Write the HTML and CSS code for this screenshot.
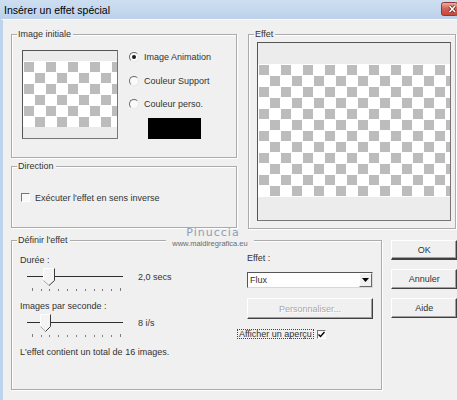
FILE: index.html
```html
<!DOCTYPE html>
<html lang="fr">

<head>
    <meta charset="UTF-8">
    <title>Insérer un effet spécial</title>
    <link rel="stylesheet" href="styles.css">
</head>

<body>
    <div class="window">
        <div class="titlebar">
            <span class="title">Insérer un effet spécial</span>
            <div class="close-btn">
                <svg width="16" height="14" viewBox="0 0 16 14">
                    <defs>
                        <linearGradient id="closeGrad" x1="0" y1="0" x2="0" y2="1">
                            <stop offset="0" stop-color="#eab2a6"/>
                            <stop offset="0.5" stop-color="#d0604f"/>
                            <stop offset="1" stop-color="#c9453a"/>
                        </linearGradient>
                    </defs>
                    <rect x="0.5" y="0.5" width="16" height="13" rx="2" fill="url(#closeGrad)" stroke="#8e3b33"/>
                    <path d="M8.5 4 L14 10 M14 4 L8.5 10" stroke="#5a1f1a" stroke-width="3"/>
                    <path d="M8.5 4 L14 10 M14 4 L8.5 10" stroke="#fff" stroke-width="1.6"/>
                </svg>
            </div>
        </div>

        <div class="dialog">
            <div class="top-row">
                <div class="left-col">
                    <div class="group group-initial">
                        <div class="group-title">Image initiale</div>
                        <div class="initial-body">
                            <div class="preview small-preview">
                                <div class="checker"></div>
                            </div>
                            <div class="options">
                                <div class="radio-row"><span class="radio checked"></span>Image Animation</div>
                                <div class="radio-row"><span class="radio"></span>Couleur Support</div>
                                <div class="radio-row"><span class="radio"></span>Couleur perso.</div>
                                <div class="color-swatch"></div>
                            </div>
                        </div>
                    </div>

                    <div class="group group-direction">
                        <div class="group-title">Direction</div>
                        <div class="check-row"><span class="checkbox"></span>Exécuter l'effet en sens inverse</div>
                    </div>
                </div>

                <div class="group group-effect">
                    <div class="group-title">Effet</div>
                    <div class="preview big-preview">
                        <div class="checker"></div>
                    </div>
                </div>
            </div>

            <div class="bottom-row">
                <div class="group group-define">
                    <div class="group-title">Définir l'effet</div>
                    <div class="define-body">
                        <div class="define-left">
                            <div class="field-label first">Durée :</div>
                            <div class="slider-row">
                                <svg class="slider" width="106" height="26" viewBox="0 0 106 26">
                                    <line x1="3" y1="10.5" x2="99" y2="10.5" stroke="#2e2e2e"/>
                                    <polygon points="19.5,2.5 30.5,2.5 30.5,14.5 25,19.5 19.5,14.5" fill="#f4f4f4"/>
                                    <path d="M19.5 14.5 V2.5 H30.5" stroke="#fff" fill="none"/>
                                    <path d="M19.5 14.5 L25 19.5" stroke="#a8a8a8" fill="none"/>
                                    <path d="M30.5 2.5 V14.5 L25 19.5" stroke="#3a3a3a" fill="none"/>
                                    <g fill="#7a7a7a">
                                        <rect x="8" y="22" width="1" height="3"/>
                                        <rect x="17" y="23" width="1" height="2"/>
                                        <rect x="25" y="23" width="1" height="2"/>
                                        <rect x="34" y="23" width="1" height="2"/>
                                        <rect x="43" y="23" width="1" height="2"/>
                                        <rect x="52" y="23" width="1" height="2"/>
                                        <rect x="61" y="23" width="1" height="2"/>
                                        <rect x="70" y="23" width="1" height="2"/>
                                        <rect x="78" y="23" width="1" height="2"/>
                                        <rect x="87" y="23" width="1" height="2"/>
                                        <rect x="96" y="22" width="1" height="3"/>
                                    </g>
                                </svg>
                                <span class="slider-value">2,0 secs</span>
                            </div>

                            <div class="field-label">Images par seconde :</div>
                            <div class="slider-row">
                                <svg class="slider" width="106" height="26" viewBox="0 0 106 26">
                                    <line x1="3" y1="10.5" x2="99" y2="10.5" stroke="#2e2e2e"/>
                                    <polygon points="16.5,2.5 26.5,2.5 26.5,14.5 21.5,19.5 16.5,14.5" fill="#f4f4f4"/>
                                    <path d="M16.5 14.5 V2.5 H26.5" stroke="#fff" fill="none"/>
                                    <path d="M16.5 14.5 L21.5 19.5" stroke="#a8a8a8" fill="none"/>
                                    <path d="M26.5 2.5 V14.5 L21.5 19.5" stroke="#3a3a3a" fill="none"/>
                                    <g fill="#7a7a7a">
                                        <rect x="8" y="22" width="1" height="3"/>
                                        <rect x="17" y="23" width="1" height="2"/>
                                        <rect x="25" y="23" width="1" height="2"/>
                                        <rect x="34" y="23" width="1" height="2"/>
                                        <rect x="43" y="23" width="1" height="2"/>
                                        <rect x="52" y="23" width="1" height="2"/>
                                        <rect x="61" y="23" width="1" height="2"/>
                                        <rect x="70" y="23" width="1" height="2"/>
                                        <rect x="78" y="23" width="1" height="2"/>
                                        <rect x="87" y="23" width="1" height="2"/>
                                        <rect x="96" y="22" width="1" height="3"/>
                                    </g>
                                </svg>
                                <span class="slider-value">8 i/s</span>
                            </div>

                            <div class="summary">L'effet contient un total de 16 images.</div>
                        </div>

                        <div class="define-right">
                            <div class="effect-label">Effet :</div>
                            <div class="select">
                                <span class="select-text">Flux</span>
                                <span class="select-arrow">
                                    <svg width="7" height="4" viewBox="0 0 7 4"><polygon points="0,0 7,0 3.5,4" fill="#000"/></svg>
                                </span>
                            </div>
                            <div class="btn custom-btn">Personnaliser...</div>
                            <div class="preview-toggle">
                                <span class="focus-label">Afficher un aperçu</span>
                                <span class="checkbox checked">
                                    <svg width="7" height="7" viewBox="0 0 7 7"><path d="M0.5 3.5 L2.5 5.5 L6.5 1" stroke="#000" stroke-width="1.4" fill="none"/></svg>
                                </span>
                            </div>
                        </div>
                    </div>
                </div>

                <div class="buttons">
                    <div class="btn default">OK</div>
                    <div class="btn">Annuler</div>
                    <div class="btn">Aide</div>
                </div>
            </div>
        </div>

        <div class="watermark">
            <div class="wm-name">Pinuccia</div>
            <div class="wm-site">www.maidiregrafica.eu</div>
        </div>
    </div>
</body>

</html>
```

FILE: styles.css
```css
* {
    box-sizing: border-box;
}

body {
    margin: 0;
    width: 457px;
    height: 400px;
    overflow: hidden;
    background-color: #f0f0f0;
    font-family: "Liberation Sans", Arial, sans-serif;
    font-size: 9px;
    color: #333;
}

.window {
    position: relative;
    height: 400px;
}

/* title bar */
.titlebar {
    height: 19px;
    display: flex;
    justify-content: space-between;
    align-items: flex-start;
    background: linear-gradient(#cddef1, #bcd2eb);
}

.title {
    padding: 4px 0 0 4px;
    font-size: 10.5px;
    line-height: 12px;
    color: #000;
}

.close-btn {
    width: 16px;
    height: 14px;
    margin-top: 2px;
}

.close-btn svg {
    display: block;
}

.dialog {
    height: 381px;
    border-left: 3px solid #bed3ec;
    border-top: 1px solid #f9fafc;
    padding: 14px 0 0 8px;
}

/* group boxes */
.group {
    border: 1px solid #ababab;
    box-shadow: inset 1px 1px 0 #fff, 1px 1px 0 #fff;
}

.group-title {
    display: table;
    margin: -6px 0 0 5px;
    padding: 0 2px 0 1px;
    background-color: #f0f0f0;
    line-height: 11px;
}

.top-row {
    display: flex;
    gap: 11px;
}

.left-col {
    width: 226px;
    display: flex;
    flex-direction: column;
    gap: 8px;
}

.group-initial {
    height: 124px;
}

.initial-body {
    display: flex;
    padding: 10px 0 0 10px;
}

/* checkerboard previews */
.preview {
    border: 1px solid #767676;
    border-top-color: #555;
    border-left-color: #555;
    background-color: #ececec;
}

.checker {
    background:
        linear-gradient(90deg, #fff 1px, transparent 1px) 0 0 / 11px 11px,
        linear-gradient(#fff 1px, transparent 1px) 0 0 / 11px 11px,
        repeating-conic-gradient(#fff 0 25%, #bcbcbc 0 50%) 0 0 / 22px 22px;
}

.small-preview {
    width: 96px;
    height: 89px;
    padding-top: 10px;
}

.small-preview .checker {
    height: 66px;
}

.big-preview {
    width: 194px;
    height: 179px;
    margin: 2px 0 0 8px;
    padding-top: 21px;
}

.big-preview .checker {
    height: 133px;
}

.options {
    margin-left: 11px;
}

.radio-row {
    display: flex;
    align-items: center;
    height: 14px;
    margin-bottom: 9.5px;
}

.radio {
    width: 10px;
    height: 10px;
    margin-right: 5px;
    border-radius: 50%;
    border: 1px solid;
    border-color: #6a6a6a #e6e6e6 #e6e6e6 #6a6a6a;
    background-color: #fafafa;
    display: flex;
    align-items: center;
    justify-content: center;
}

.radio.checked::after {
    content: "";
    width: 4px;
    height: 4px;
    border-radius: 50%;
    background-color: #1a1a1a;
}

.color-swatch {
    width: 53px;
    height: 21px;
    margin: -3px 0 0 19px;
    background-color: #000;
}

.group-direction {
    height: 62px;
}

.check-row {
    display: flex;
    align-items: center;
    height: 13px;
    margin: 19px 0 0 9px;
}

.checkbox {
    width: 9px;
    height: 9px;
    margin-right: 5px;
    border: 1px solid;
    border-color: #777 #fff #fff #777;
    background-color: #f8f8f8;
    display: flex;
    align-items: center;
    justify-content: center;
}

.group-effect {
    width: 208px;
    height: 195px;
}

/* bottom part */
.bottom-row {
    display: flex;
    gap: 9px;
    margin-top: 11px;
}

.group-define {
    width: 373px;
    height: 150px;
}

.define-body {
    display: flex;
}

.define-left {
    width: 225px;
    padding-left: 8px;
}

.field-label {
    margin-top: 8px;
    line-height: 12px;
}

.slider-row {
    display: flex;
    align-items: flex-start;
}

.slider {
    display: block;
    margin-left: 4px;
}

.slider-value {
    margin: 5px 0 0 8px;
    line-height: 12px;
}

.summary {
    margin-top: 8px;
    line-height: 12px;
}

.define-right {
    width: 136px;
}

.effect-label {
    margin: 6px 0 0 10px;
    line-height: 12px;
}

.select {
    width: 126px;
    height: 16px;
    margin: 8px 0 0 10px;
    display: flex;
    justify-content: space-between;
    align-items: stretch;
    border: 1px solid;
    border-color: #555 #d8d8d8 #d8d8d8 #555;
    background-color: #fff;
}

.select-text {
    padding-left: 2px;
    line-height: 14px;
}

.select-arrow {
    width: 13px;
    display: flex;
    align-items: center;
    justify-content: center;
    background-color: #f0f0f0;
    border: 1px solid;
    border-color: #fff #6a6a6a #6a6a6a #fff;
}

.btn {
    height: 20px;
    display: flex;
    align-items: center;
    justify-content: center;
    background-color: #f0f0f0;
    border: 1px solid;
    border-color: #fff #404040 #404040 #fff;
    box-shadow: inset -1px -1px 0 #a0a0a0;
}

.custom-btn {
    width: 126px;
    height: 21px;
    margin: 10px 0 0 10px;
    color: #a9a9a9;
    text-shadow: 1px 1px 0 #fff;
}

.preview-toggle {
    display: flex;
    align-items: center;
    margin-top: 10px;
}

.focus-label {
    border: 1px dotted #444;
    padding: 0 1px;
    line-height: 8px;
}

.preview-toggle .checkbox {
    margin: 0 0 0 3px;
}

.buttons {
    width: 66px;
    display: flex;
    flex-direction: column;
    gap: 9px;
}

.btn.default {
    border-bottom-width: 2px;
}

/* watermark over the dialog */
.watermark {
    position: absolute;
    left: 166px;
    top: 226px;
    width: 88px;
    text-align: center;
}

.wm-name {
    padding-left: 6px;
    font-family: "DejaVu Sans", sans-serif;
    font-size: 11px;
    letter-spacing: 1px;
    line-height: 14px;
    color: #8c9db6;
}

.wm-site {
    background-color: #f0f0f0;
    font-size: 7.5px;
    line-height: 8px;
    color: #6a6a6a;
}
```
